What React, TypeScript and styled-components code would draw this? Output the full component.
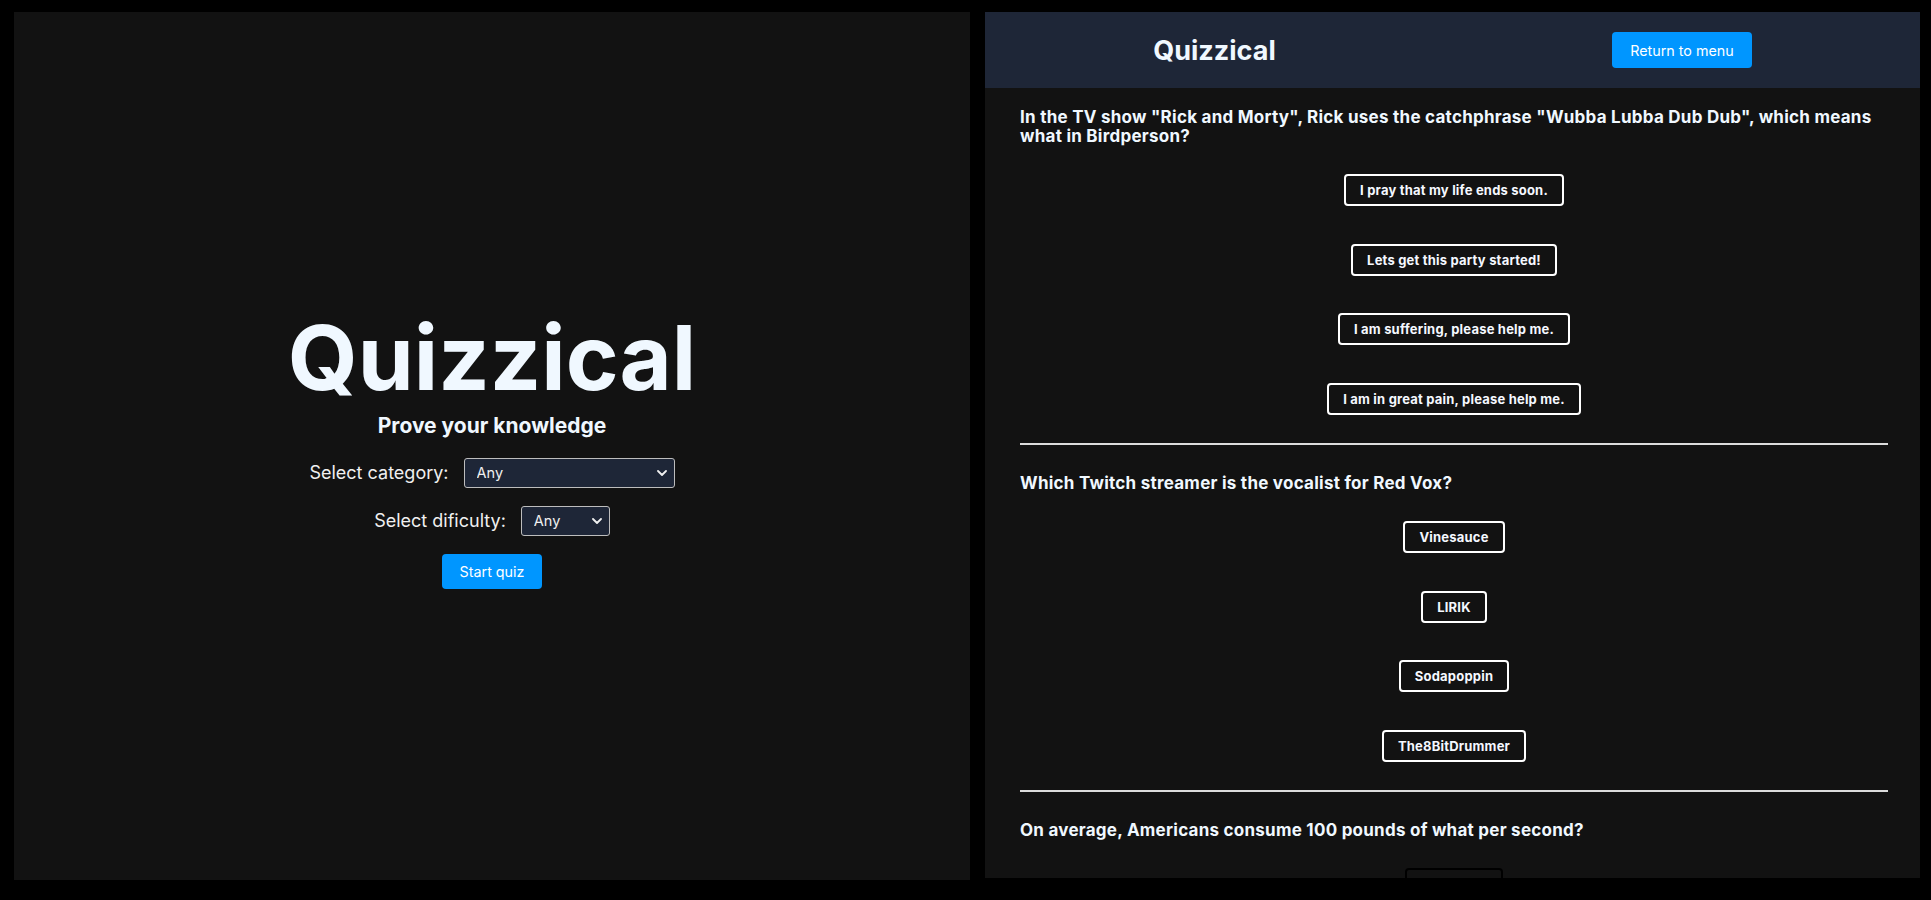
import * as React from "react";
import styled, { createGlobalStyle } from "styled-components";

const GlobalStyle = createGlobalStyle`
  html, body {
    margin: 0;
    padding: 0;
    background: #000;
    font-family: Inter, "Noto Sans", sans-serif;
    color: #f0f8ff;
  }
  * {
    box-sizing: border-box;
  }
`;

interface Question {
  text: string;
  answers: string[];
  pending?: boolean;
}

const questions: Question[] = [
  {
    text: 'In the TV show "Rick and Morty", Rick uses the catchphrase "Wubba Lubba Dub Dub", which means what in Birdperson?',
    answers: [
      "I pray that my life ends soon.",
      "Lets get this party started!",
      "I am suffering, please help me.",
      "I am in great pain, please help me.",
    ],
  },
  {
    text: "Which Twitch streamer is the vocalist for Red Vox?",
    answers: ["Vinesauce", "LIRIK", "Sodapoppin", "The8BitDrummer"],
  },
  {
    text: "On average, Americans consume 100 pounds of what per second?",
    answers: ["Chocolate", "Potatoes", "Donuts", "Cocaine"],
    pending: true,
  },
];

function Chevron() {
  return (
    <ChevronIcon width="10" height="6" viewBox="0 0 10 6" fill="none">
      <path d="M1 1l4 4 4-4" stroke="#f0f0f0" strokeWidth="1.8" strokeLinecap="round" strokeLinejoin="round" />
    </ChevronIcon>
  );
}

function Dropdown({ width }: { width: number }) {
  return (
    <SelectWrap $width={width}>
      <Select defaultValue="any">
        <option value="any">Any</option>
      </Select>
      <Chevron />
    </SelectWrap>
  );
}

/** Start screen: title, category and difficulty pickers. */
function MenuPanel() {
  return (
    <Menu>
      <Title>Quizzical</Title>
      <Tagline>Prove your knowledge</Tagline>
      <Field>
        <FieldLabel>Select category:</FieldLabel>
        <Dropdown width={211} />
      </Field>
      <Field>
        <FieldLabel>Select dificulty:</FieldLabel>
        <Dropdown width={89} />
      </Field>
      <PrimaryButton>Start quiz</PrimaryButton>
    </Menu>
  );
}

/** Quiz screen: header bar and a list of questions. */
function QuizPanel() {
  return (
    <Quiz>
      <Header>
        <HeaderTitle>Quizzical</HeaderTitle>
        <HeaderButton>Return to menu</HeaderButton>
      </Header>
      <QuestionList>
        {questions.map((q) => (
          <QuestionBlock key={q.text}>
            <QuestionText>{q.text}</QuestionText>
            <Answers>
              {q.answers.map((a) => (
                <AnswerButton key={a} $pending={q.pending}>
                  {a}
                </AnswerButton>
              ))}
            </Answers>
          </QuestionBlock>
        ))}
      </QuestionList>
    </Quiz>
  );
}

export default function App() {
  return (
    <>
      <GlobalStyle />
      <Screen>
        <MenuPanel />
        <QuizPanel />
      </Screen>
    </>
  );
}

const Screen = styled.div`
  display: flex;
  gap: 15px;
  padding: 12px 11px 0 14px;
  height: 900px;
  align-items: flex-start;
`;

const Menu = styled.section`
  width: 956px;
  height: 868px;
  flex-shrink: 0;
  background: #121212;
  display: flex;
  flex-direction: column;
  align-items: center;
  justify-content: center;
`;

const Title = styled.h1`
  margin: 0;
  font-size: 90px;
  font-weight: 700;
  line-height: 110px;
  color: #f0f8ff;
`;

const Tagline = styled.p`
  margin: 0 0 19px;
  font-size: 21px;
  font-weight: 700;
  line-height: 1.21;
  color: #f0f8ff;
`;

const Field = styled.label`
  display: flex;
  align-items: center;
  gap: 15px;
  margin-bottom: 18px;
  font-size: 18px;
  color: #f0f0f0;
`;

const FieldLabel = styled.span`
  line-height: 1.2;
`;

const SelectWrap = styled.div<{ $width: number }>`
  position: relative;
  width: ${(p) => p.$width}px;
  height: 30px;
`;

const Select = styled.select`
  appearance: none;
  width: 100%;
  height: 100%;
  padding: 0 12px;
  background: #1e2637;
  color: #f0f0f0;
  border: 1px solid #bdbdbd;
  border-radius: 3px;
  font-family: Inter, "Noto Sans", sans-serif;
  font-size: 14.5px;
`;

const ChevronIcon = styled.svg`
  position: absolute;
  right: 8px;
  top: 12px;
  pointer-events: none;
`;

const PrimaryButton = styled.button`
  height: 35px;
  padding: 0 18px;
  border: none;
  border-radius: 4px;
  background: #0096ff;
  color: #fff;
  font-family: Inter, "Noto Sans", sans-serif;
  font-size: 14.3px;
`;

const Quiz = styled.section`
  flex: 1;
  height: 866px;
  background: #121212;
  overflow: hidden;
  display: flex;
  flex-direction: column;
`;

const Header = styled.header`
  height: 76px;
  flex-shrink: 0;
  background: #1e2637;
  display: flex;
  align-items: center;
  justify-content: space-around;
`;

const HeaderTitle = styled.h2`
  margin: 0;
  font-size: 27px;
  font-weight: 700;
  color: #f0f8ff;
`;

const HeaderButton = styled(PrimaryButton)`
  height: 36px;
`;

const QuestionList = styled.div`
  padding: 20px 32px 0 35px;
`;

const QuestionBlock = styled.article`
  display: flex;
  flex-direction: column;
  gap: 28px;
  padding-bottom: 28px;
  margin-bottom: 29px;
  border-bottom: 2px solid #dcdcdc;
`;

const QuestionText = styled.h3`
  margin: 0;
  font-size: 17px;
  font-weight: 700;
  letter-spacing: 0.25px;
  line-height: 19.2px;
  color: #f0f8ff;
`;

const Answers = styled.div`
  display: flex;
  flex-direction: column;
  align-items: center;
  gap: 37.5px;
`;

const AnswerButton = styled.button<{ $pending?: boolean }>`
  height: 32px;
  padding: 0 14px;
  background: transparent;
  border: 2px solid ${(p) => (p.$pending ? "#000" : "#fff")};
  border-radius: 4px;
  color: #f5f8ff;
  font-family: Inter, "Noto Sans", sans-serif;
  font-size: 13px;
  font-weight: 700;
  letter-spacing: 0.2px;
`;
